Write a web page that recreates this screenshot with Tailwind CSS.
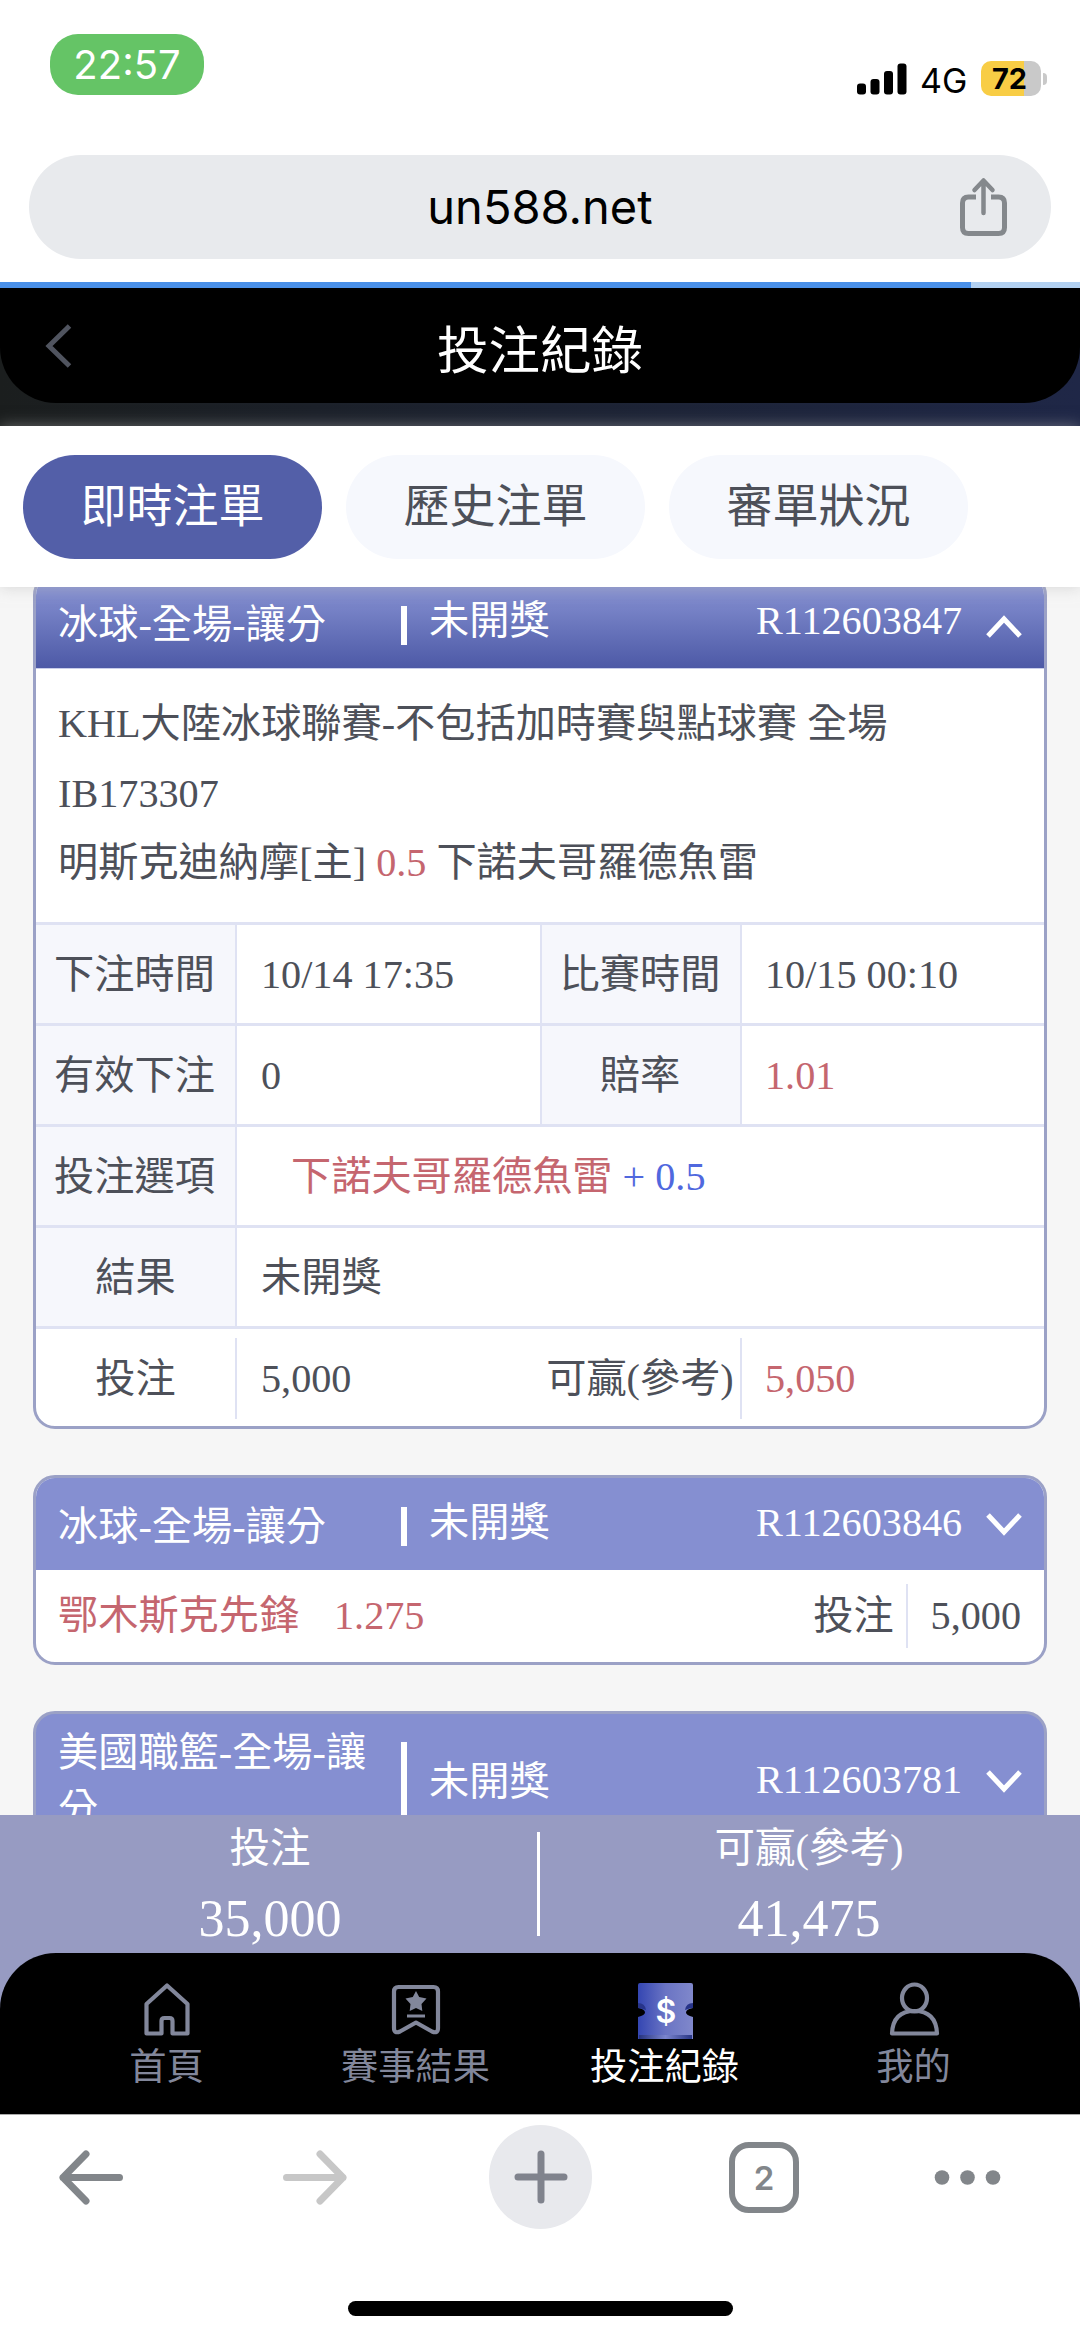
<!DOCTYPE html>
<html lang="zh-Hant">
<head>
<meta charset="utf-8">
<title>投注紀錄</title>
<script src="https://cdn.jsdelivr.net/npm/@tailwindcss/browser@4"></script>
</head>
<body class="w-[1080px] h-[2339px] overflow-hidden bg-white flex flex-col font-['Liberation_Serif','Noto_Sans_CJK_TC',serif] text-[40.200px] text-[#4d5059]">

<!-- status bar -->
<div class="h-[155px] shrink-0 flex items-start pl-[50px] pr-[33px] text-black font-['Inter',sans-serif]">
  <div class="mt-[34px] w-[154px] h-[61px] rounded-[28px] bg-[#65c466] text-white text-[40px] leading-[61px] text-center">22:57</div>
  <div class="mt-[61px] ml-auto h-[35px] flex items-center">
    <svg width="50" height="35" viewBox="0 0 50 35"><rect x="0" y="22.500" width="9" height="11" rx="3"/><rect x="13.500" y="18" width="9" height="15.500" rx="3"/><rect x="27" y="10" width="9" height="23.500" rx="3"/><rect x="40.500" y="2.500" width="9" height="31" rx="3"/></svg>
    <div class="ml-[13px] w-[48px] text-[34px] leading-[39px] h-[35px]">4G</div>
    <div class="ml-[13px] w-[60px] h-[35px] rounded-[10px] bg-linear-to-r from-[#f8cd45] from-72% to-[#c9c9c9] to-72% text-[29px] leading-[36px] font-bold pl-[11px]">72</div>
    <div class="ml-[2px] w-[4px] h-[12px] rounded-r-full bg-[#c9c9c9]"></div>
  </div>
</div>

<!-- address bar -->
<div class="h-[104px] shrink-0 mx-[29px] rounded-full bg-[#e8eaed] flex items-center justify-center relative">
  <div class="text-[47px] leading-[104px] text-black font-['Inter',sans-serif]">un588.net</div>
  <svg class="absolute left-[931px] top-[22px]" width="48" height="60" viewBox="0 0 48 60" fill="none" stroke="#84888c" stroke-width="5" stroke-linecap="round" stroke-linejoin="round"><path d="M16 20H8.500Q2.500 20 2.500 26V50.500Q2.500 56.500 8.500 56.500H38.500Q44.500 56.500 44.500 50.500V26Q44.500 20 38.500 20H31" stroke-linecap="butt"/><path d="M23.500 36V4M14.500 13L23.500 3.500L32.500 13" stroke-width="4.500"/></svg>
</div>
<div class="mt-[23px] h-[6px] shrink-0 bg-[#b3d1f1] flex"><div class="w-[971px] bg-[#4a90e8]"></div></div>

<!-- page header -->
<div class="h-[138px] shrink-0 bg-linear-to-r from-[#1b1e1e] to-[#1f2747]">
  <div class="h-[115px] rounded-b-[56px] bg-black relative flex justify-center">
    <svg class="absolute left-[45px] top-[36px]" width="28" height="44" viewBox="0 0 28 44" fill="none" stroke="#50545f" stroke-width="5"><path d="M24.500 2L4 22L24.500 42"/></svg>
    <div class="text-[51.500px] leading-[128px] text-white">投注紀錄</div>
  </div>
</div>

<!-- tabs -->
<div class="h-[161px] shrink-0 bg-white relative z-10 shadow-[0_0_14px_rgba(180,180,180,0.500)] pl-[23px] pt-[29px] flex gap-[24px] text-[46px] leading-[103px] text-center">
  <div class="w-[299px] h-[104px] rounded-full bg-[#535fa8] text-white">即時注單</div>
  <div class="w-[299px] h-[104px] rounded-full bg-[#f6f8fd]">歷史注單</div>
  <div class="w-[299px] h-[104px] rounded-full bg-[#f6f8fd]">審單狀況</div>
</div>

<!-- bet list -->
<div class="h-[1228px] shrink-0 overflow-hidden bg-[#f6f6f6] px-[33px]">
  <div class="-mt-[14px] h-[856px] rounded-[22px] border-[3px] border-[#9ba1c6] bg-white overflow-hidden flex flex-col">
    <div class="h-[92px] shrink-0 bg-linear-to-b from-[#8f99d8] to-[#4d59a6] text-white flex pl-[22px] leading-[56px]">
      <div class="w-[343px] pt-[21px]">冰球-全場-讓分</div>
      <div class="mt-[30px] w-[6px] h-[39px] bg-white"></div>
      <div class="ml-[22px] w-[327px] pt-[17px]">未開獎</div>
      <div class="pt-[17px] w-[207px]">R112603847</div>
      <svg class="mt-[38px] ml-[23px]" width="36" height="24" viewBox="0 0 36 24" fill="none" stroke="#fff" stroke-width="5"><path d="M2 22L18 5L34 22"/></svg>
    </div>
    <div class="h-[254px] shrink-0 border-t border-[#c9cdea] pt-[20px] pl-[22px] leading-[69.600px]">
      <div>KHL大陸冰球聯賽-不包括加時賽與點球賽 全場</div>
      <div>IB173307</div>
      <div>明斯克迪納摩[主] <span class="text-[#c5666f]">0.5</span> 下諾夫哥羅德魚雷</div>
    </div>
    <div class="h-[101px] shrink-0 grid grid-cols-[201px_303px_202px_302px] leading-[99px] border-t-[3px] border-[#dfe2f3]">
      <div class="bg-[#f6f7fc] border-r-2 border-[#dfe2f3] pr-[2px] text-center">下注時間</div>
      <div class="pl-[24px]">10/14 17:35</div>
      <div class="bg-[#f6f7fc] border-x-2 border-[#dfe2f3] pr-[2px] text-center">比賽時間</div>
      <div class="pl-[23px]">10/15 00:10</div>
    </div>
    <div class="h-[101px] shrink-0 grid grid-cols-[201px_303px_202px_302px] leading-[99px] border-t-[3px] border-[#dfe2f3]">
      <div class="bg-[#f6f7fc] border-r-2 border-[#dfe2f3] pr-[2px] text-center">有效下注</div>
      <div class="pl-[24px]">0</div>
      <div class="bg-[#f6f7fc] border-x-2 border-[#dfe2f3] pr-[2px] text-center">賠率</div>
      <div class="pl-[23px] text-[#c5666f]">1.01</div>
    </div>
    <div class="h-[101px] shrink-0 grid grid-cols-[201px_1fr] leading-[99px] border-t-[3px] border-[#dfe2f3]">
      <div class="bg-[#f6f7fc] border-r-2 border-[#dfe2f3] pr-[2px] text-center">投注選項</div>
      <div class="pl-[54px] text-[#c5666f]">下諾夫哥羅德魚雷 <span class="text-[#5068de]">+ 0.5</span></div>
    </div>
    <div class="h-[101px] shrink-0 grid grid-cols-[201px_1fr] leading-[99px] border-t-[3px] border-[#dfe2f3]">
      <div class="bg-[#f6f7fc] border-r-2 border-[#dfe2f3] text-center">結果</div>
      <div class="pl-[24px]">未開獎</div>
    </div>
    <div class="grow grid grid-cols-[201px_303px_202px_302px] leading-[81px] border-t-[3px] border-[#dfe2f3] pt-[9px] pb-[10px]">
      <div class="border-r-2 border-[#dfe2f3] text-center">投注</div>
      <div class="pl-[24px]">5,000</div>
      <div class="border-r-2 border-[#dfe2f3] text-center whitespace-nowrap">可贏(參考)</div>
      <div class="pl-[23px] text-[#c5666f]">5,050</div>
    </div>
  </div>

  <div class="mt-[46px] h-[190px] rounded-[22px] border-[3px] border-[#9ba1c6] bg-white overflow-hidden flex flex-col">
    <div class="h-[92px] shrink-0 bg-[#858fd1] text-white flex pl-[22px] leading-[56px]">
      <div class="w-[343px] pt-[21px]">冰球-全場-讓分</div>
      <div class="mt-[29px] w-[6px] h-[39px] bg-white"></div>
      <div class="ml-[22px] w-[327px] pt-[17px]">未開獎</div>
      <div class="pt-[17px] w-[207px]">R112603846</div>
      <svg class="mt-[35px] ml-[23px]" width="36" height="24" viewBox="0 0 36 24" fill="none" stroke="#fff" stroke-width="5"><path d="M2 2L18 19L34 2"/></svg>
    </div>
    <div class="pt-[14px] pl-[22px] pr-[23px] flex leading-[63px]">
      <div class="text-[#c5666f] w-[276px]">鄂木斯克先鋒</div>
      <div class="text-[#c5666f] mr-auto">1.275</div>
      <div class="h-[64px] pr-[12px] border-r-2 border-[#dfe2f3]">投注</div>
      <div class="pl-[23px]">5,000</div>
    </div>
  </div>

  <div class="mt-[46px] h-[240px] rounded-[22px] border-[3px] border-[#9ba1c6] bg-[#858fd1] text-white overflow-hidden flex pl-[22px] leading-[56px]">
    <div class="w-[343px] pt-[11px] pr-[30px] shrink-0">美國職籃-全場-讓分</div>
    <div class="mt-[28px] w-[6px] h-[90px] bg-white"></div>
    <div class="ml-[22px] w-[327px] pt-[40px]">未開獎</div>
    <div class="pt-[38px] w-[207px]">R112603781</div>
    <svg class="mt-[56px] ml-[23px]" width="36" height="24" viewBox="0 0 36 24" fill="none" stroke="#fff" stroke-width="5"><path d="M2 2L18 19L34 2"/></svg>
  </div>
</div>

<!-- totals and bottom navigation -->
<div class="h-[299px] shrink-0 bg-[#979bc2]">
  <div class="h-[138px] flex text-white text-center">
    <div class="w-[537px] pl-[3px] pt-[6px]"><div class="leading-[56px] text-[40.500px]">投注</div><div class="leading-[80px] text-[52px] mt-[2px]">35,000</div></div>
    <div class="mt-[17px] w-[3px] h-[104px] bg-white"></div>
    <div class="w-[538px] pt-[6px]"><div class="leading-[56px] text-[40.500px]">可贏(參考)</div><div class="leading-[80px] text-[52px] mt-[2px]">41,475</div></div>
  </div>
  <div class="h-[161px] rounded-t-[56px] bg-black grid grid-cols-4 pl-[42px] pr-[42px] pt-[28px] text-[37.300px] leading-[58px] text-[#82879b] text-center">
    <div class="flex flex-col items-center">
      <svg width="60" height="58" viewBox="0 0 60 58" fill="none" stroke="#82879b" stroke-width="4.200" stroke-linejoin="round"><path d="M30 4.500L50.500 23V52.500H35.500V40Q35.500 37 32.500 37H27.500Q24.500 37 24.500 40V52.500H9.500V23Z"/></svg>
      <div>首頁</div>
    </div>
    <div class="flex flex-col items-center">
      <svg width="60" height="58" viewBox="0 0 60 58" fill="none" stroke="#82879b" stroke-width="4.200" stroke-linejoin="round"><path d="M12.500 6H47.500Q52 6 52 10.500V47Q52 53 46 50.500L30 41.500L14 50.500Q8 53 8 47V10.500Q8 6 12.500 6Z"/><path d="M21 35H39" stroke-width="3"/><path d="M30 10L33.200 16L40.500 17.500L35.500 23L36.300 30L30 27L23.700 30L24.500 23L19.500 17.500L26.800 16Z" fill="#82879b" stroke="none"/></svg>
      <div>賽事結果</div>
    </div>
    <div class="flex flex-col items-center text-white">
      <svg width="60" height="58" viewBox="0 0 60 58"><defs><linearGradient id="tk"><stop offset="0" stop-color="#3446b2"/><stop offset=".5" stop-color="#6a74c4"/><stop offset="1" stop-color="#8088cb"/></linearGradient><linearGradient id="ft"><stop offset="0" stop-color="#263380"/><stop offset=".5" stop-color="#7b85cf"/><stop offset="1" stop-color="#283584"/></linearGradient></defs><path d="M5 2H56Q58 2 58 4V27Q51 28 51 31.500Q51 34 58 36V58H3V36Q10 34 10 31.500Q10 28 3 27V4Q3 2 5 2Z" fill="url(#tk)"/><path d="M3 22Q10 22 11 29L8 28Q6 27 3 27ZM58 22Q51 22 50 29L53 28Q55 27 58 27Z" fill="#27348a"/><rect x="4" y="54" width="53" height="4" fill="url(#ft)"/><text x="31" y="41.500" text-anchor="middle" font-family="Inter" font-weight="600" font-size="32" fill="#fff">$</text></svg>
      <div>投注紀錄</div>
    </div>
    <div class="flex flex-col items-center">
      <svg width="60" height="58" viewBox="0 0 60 58" fill="none" stroke="#82879b" stroke-width="4.200" stroke-linejoin="round"><ellipse cx="30.500" cy="17" rx="12.500" ry="13.500"/><path d="M8 52.500H53Q52 30 30.500 30Q9 30 8 52.500Z"/></svg>
      <div>我的</div>
    </div>
  </div>
</div>

<!-- browser toolbar -->
<div class="h-[187px] shrink-0 pt-[11px] pl-[58px] flex items-start border-t border-[#aaa]">
  <svg class="mt-[24px]" width="66" height="56" viewBox="0 0 66 56" fill="none" stroke="#82868a" stroke-width="7" stroke-linecap="round" stroke-linejoin="round"><path d="M61.500 27.500H5M28 4L5 27.500L28 51"/></svg>
  <svg class="mt-[24px] ml-[158px]" width="66" height="56" viewBox="0 0 66 56" fill="none" stroke="#c7c7c7" stroke-width="7" stroke-linecap="round" stroke-linejoin="round"><path d="M4.500 27.500H61M38 4L61 27.500L38 51"/></svg>
  <div class="-mt-px ml-[141px] w-[103px] h-[104px] rounded-full bg-[#e8e9ed] flex items-center justify-center"><svg width="54" height="54" viewBox="0 0 54 54" stroke="#80838d" stroke-width="7" stroke-linecap="round"><path d="M27 4V50M4 27H50"/></svg></div>
  <div class="mt-[16px] ml-[137px] w-[70px] h-[71px] rounded-[20px] border-[6px] border-[#82868a] text-[#82868a] text-[33px] leading-[60px] font-semibold text-center font-['Inter',sans-serif]">2</div>
  <svg class="mt-[43px] ml-[134px]" width="68" height="17" viewBox="0 0 68 17" fill="#82868a"><circle cx="9" cy="8.500" r="7.300"/><circle cx="34.500" cy="8.500" r="7.300"/><circle cx="60" cy="8.500" r="7.300"/></svg>
</div>
<div class="ml-[348px] w-[385px] h-[15px] shrink-0 rounded-full bg-black"></div>
</body>
</html>
